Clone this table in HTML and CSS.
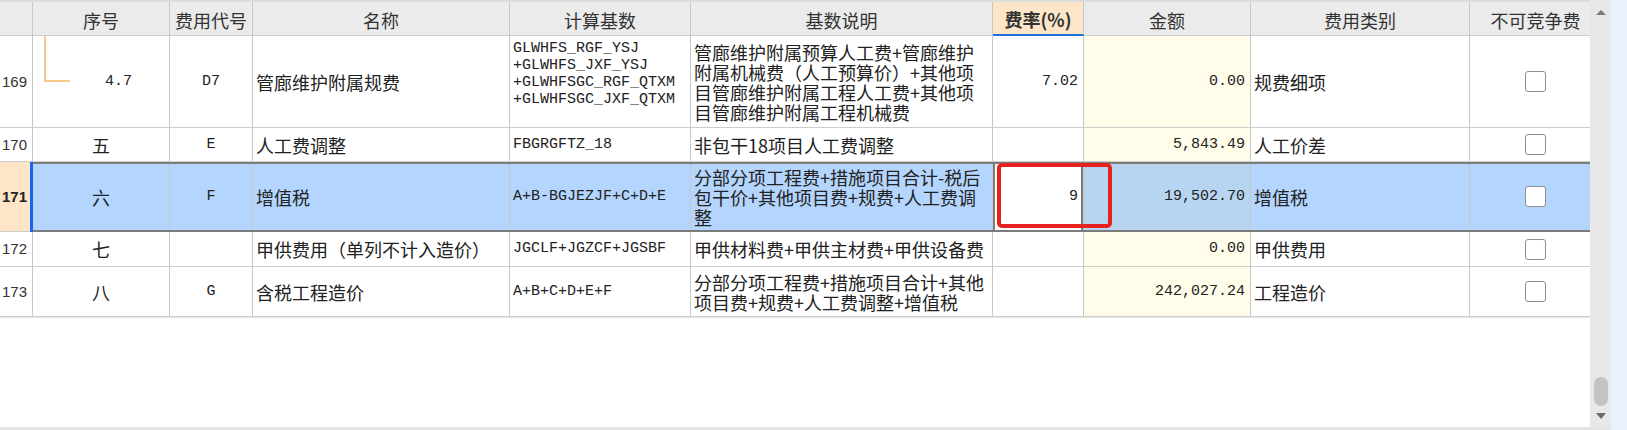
FILE: index.html
```html
<!DOCTYPE html>
<html lang="zh-CN">
<head>
<meta charset="utf-8">
<title>费用汇总</title>
<link rel="stylesheet" href="styles.css">
</head>
<body>
<div class="page">
  <div class="left">
    <div class="app">
      <div class="main">
        <div class="row head">
          <div class="c rn"></div>
          <div class="c">序号</div>
          <div class="c">费用代号</div>
          <div class="c">名称</div>
          <div class="c">计算基数</div>
          <div class="c">基数说明</div>
          <div class="c hrate">费率(%)</div>
          <div class="c">金额</div>
          <div class="c">费用类别</div>
          <div class="c">不可竞争费</div>
        </div>

        <div class="row r169">
          <div class="c rn">169</div>
          <div class="c mid mono seq-indent"><span class="tree"></span>4.7</div>
          <div class="c mid mono">D7</div>
          <div class="c">管廊维护附属规费</div>
          <div class="c mono top"><div>GLWHFS_RGF_YSJ<br>+GLWHFS_JXF_YSJ<br>+GLWHFSGC_RGF_QTXM<br>+GLWHFSGC_JXF_QTXM</div></div>
          <div class="c"><div>管廊维护附属预算人工费+管廊维护<br>附属机械费（人工预算价）+其他项<br>目管廊维护附属工程人工费+其他项<br>目管廊维护附属工程机械费</div></div>
          <div class="c num mono">7.02</div>
          <div class="c num mono amt">0.00</div>
          <div class="c">规费细项</div>
          <div class="c mid"><span class="cb"></span></div>
        </div>

        <div class="row r170">
          <div class="c rn">170</div>
          <div class="c mid">五</div>
          <div class="c mid mono">E</div>
          <div class="c">人工费调整</div>
          <div class="c mono">FBGRGFTZ_18</div>
          <div class="c">非包干18项目人工费调整</div>
          <div class="c num mono"></div>
          <div class="c num mono amt">5,843.49</div>
          <div class="c">人工价差</div>
          <div class="c mid"><span class="cb"></span></div>
        </div>

        <div class="row r171 sel">
          <div class="c rn">171</div>
          <div class="c mid">六</div>
          <div class="c mid mono">F</div>
          <div class="c">增值税</div>
          <div class="c mono">A+B-BGJEZJF+C+D+E</div>
          <div class="c"><div>分部分项工程费+措施项目合计-税后<br>包干价+其他项目费+规费+人工费调<br>整</div></div>
          <div class="c num mono edit">9</div>
          <div class="c num mono amt">19,502.70</div>
          <div class="c">增值税</div>
          <div class="c mid"><span class="cb"></span></div>
          <span class="redbox"></span>
        </div>

        <div class="row r172">
          <div class="c rn">172</div>
          <div class="c mid">七</div>
          <div class="c mid mono"></div>
          <div class="c">甲供费用（单列不计入造价）</div>
          <div class="c mono">JGCLF+JGZCF+JGSBF</div>
          <div class="c">甲供材料费+甲供主材费+甲供设备费</div>
          <div class="c num mono"></div>
          <div class="c num mono amt">0.00</div>
          <div class="c">甲供费用</div>
          <div class="c mid"><span class="cb"></span></div>
        </div>

        <div class="row r173">
          <div class="c rn">173</div>
          <div class="c mid">八</div>
          <div class="c mid mono">G</div>
          <div class="c">含税工程造价</div>
          <div class="c mono">A+B+C+D+E+F</div>
          <div class="c"><div>分部分项工程费+措施项目合计+其他<br>项目费+规费+人工费调整+增值税</div></div>
          <div class="c num mono"></div>
          <div class="c num mono amt">242,027.24</div>
          <div class="c">工程造价</div>
          <div class="c mid"><span class="cb"></span></div>
        </div>

        <div class="empty"></div>
      </div>
      <div class="vscroll">
        <span class="arrow up"></span>
        <span class="thumb"></span>
        <span class="arrow down"></span>
      </div>
    </div>
    <div class="bottom"></div>
  </div>
  <div class="side"></div>
</div>
</body>
</html>
```

FILE: styles.css
```css
* { box-sizing: border-box; }
html, body { margin: 0; padding: 0; background: #ffffff; }
body {
  width: 1627px;
  height: 430px;
  overflow: hidden;
  font-family: "Noto Sans CJK SC", "Noto Sans", sans-serif;
  font-size: 18px;
  color: #222222;
}
.page { display: flex; height: 430px; }
.left { width: 1611px; display: flex; flex-direction: column; }
.app { display: flex; height: 427px; }
.bottom { height: 3px; background: #e4e4e4; }
.side { width: 16px; background: #eaf1fb; }

.main {
  width: 1590px;
  overflow: hidden;
  display: flex;
  flex-direction: column;
  border-top: 2px solid #dddddd;
  background: #ffffff;
}
.row {
  display: grid;
  grid-template-columns: 33px 137px 83px 257px 181px 302px 91px 167px 219px 132px;
  width: 1602px;
  flex: none;
}
.c {
  display: flex;
  align-items: center;
  justify-content: flex-start;
  padding: 0 3px;
  border-right: 1px solid #c8c8c8;
  border-bottom: 1px solid #cdcdcd;
  white-space: nowrap;
  overflow: hidden;
  line-height: 20px;
  background: #ffffff;
}
.head { height: 34px; }
.head .c {
  justify-content: center;
  background: #ebebeb;
  color: #333333;
  padding-top: 2px;
}
.head .hrate {
  background: #fde6c8;
  font-weight: bold;
  border-bottom: 2px solid #1f6fe3;
}
.r169 { height: 92px; }
.r170 { height: 34px; }
.r171 { height: 70px; }
.r172 { height: 35px; }
.r173 { height: 50px; }

.rn {
  justify-content: flex-end;
  padding: 0 5px 0 0;
  font-family: "Liberation Sans", sans-serif;
  font-size: 15px;
  color: #333333;
}
.mid { justify-content: center; }
.num { justify-content: flex-end; padding: 0 5px 0 0; }
.mono {
  font-family: "Liberation Mono", monospace;
  font-size: 15px;
  color: #222222;
}
.top { align-items: flex-start; padding-top: 4px; line-height: 17px; }
.amt { background: #fffdea; }

.seq-indent { position: relative; padding-left: 38px; }
.tree {
  position: absolute;
  left: 11px;
  top: 0;
  width: 26px;
  height: 46px;
  border-left: 2px solid #f7c98e;
  border-bottom: 2px solid #f7c98e;
}

.cb {
  display: block;
  width: 21px;
  height: 21px;
  border: 1.5px solid #8e8e8e;
  border-radius: 3px;
  background: #ffffff;
}

.sel { position: relative; }
.sel .c { background: #b4d5fd; }
.sel .rn { background: #fde5c6; font-weight: bold; color: #222222; }
.sel .amt { background: #b7d5f0; }
.sel .edit { background: #ffffff; box-shadow: inset 2px 0 0 #7c7c7c, inset -2px 0 0 #7c7c7c; }
.sel::before {
  content: "";
  position: absolute;
  left: 30px;
  top: 0;
  bottom: 0;
  width: 3px;
  background: #1766e8;
}
.sel::after {
  content: "";
  position: absolute;
  left: 33px;
  right: 0;
  top: 0;
  bottom: 0;
  border-top: 2px solid #7c7c7c;
  border-bottom: 2px solid #7c7c7c;
  pointer-events: none;
}
.redbox {
  position: absolute;
  left: 997px;
  top: 1px;
  width: 115px;
  height: 65px;
  border: 4px solid #e6221e;
  border-radius: 5px;
  z-index: 2;
}

.empty { flex: 1; border-top: 1px solid #e6e6e6; }

.vscroll {
  width: 21px;
  background: #e8e8e8;
  display: flex;
  flex-direction: column;
  align-items: center;
  padding: 10px 0 8px;
}
.arrow { width: 0; height: 0; border-left: 5px solid transparent; border-right: 5px solid transparent; }
.arrow.up { border-bottom: 5px solid #7a7a7a; }
.arrow.down { border-top: 6px solid #6a6a6a; margin-top: 7px; }
.thumb {
  margin-top: auto;
  width: 14px;
  height: 29px;
  border-radius: 7px;
  background: #c3c3c3;
}
```
